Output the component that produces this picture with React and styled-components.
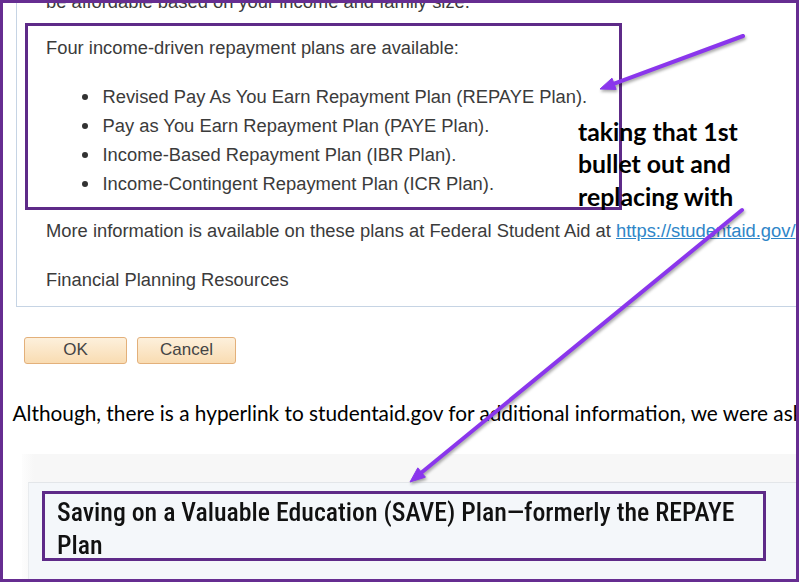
import React, { useLayoutEffect, useRef, useState } from "react";
import styled, { createGlobalStyle } from "styled-components";

const Global = createGlobalStyle`
  html, body { margin: 0; padding: 0; background: #fff; }
  body { font-family: "Liberation Sans", Arial, sans-serif; }
`;

const Frame = styled.div`
  position: relative;
  width: 799px;
  height: 582px;
  box-sizing: border-box;
  border: 3px solid #662d91;
  overflow: hidden;
  background: #fff;
`;

const Page = styled.div`
  display: flex;
  flex-direction: column;
  align-items: flex-start;
  height: 100%;
`;

const Panel = styled.section`
  display: flex;
  flex-direction: column;
  align-items: flex-start;
  margin: -12px 0 0 13px;
  width: 1100px;
  padding-bottom: 14.5px;
  border-left: 1px solid #c6d4e4;
  border-bottom: 1px solid #c6d4e4;
  font-family: "Liberation Sans", Arial, sans-serif;
  font-size: 18.35px;
  line-height: 22px;
  color: #3b3b3b;
`;

const Para = styled.p`
  margin: ${(p) => p.$mt || 0}px 0 0 0;
  padding-left: 29px;
  white-space: nowrap;
`;

const HighlightBox = styled.div`
  margin: 10px 0 0 8px;
  width: 597px;
  box-sizing: border-box;
  border: 3px solid #5e2a88;
  padding: 10.75px 0 9.25px 18px;
`;

const Intro = styled.div`
  white-space: nowrap;
`;

const List = styled.ul`
  margin: 23.25px 0 0 0;
  padding: 0;
  list-style: none;
`;

const Item = styled.li`
  display: flex;
  align-items: center;
  line-height: 29px;
  padding-left: 36px;
  white-space: nowrap;
`;

const Dot = styled.span`
  flex: none;
  width: 6px;
  height: 6px;
  margin: 1px 14.5px 0 0;
  border-radius: 50%;
  background: #333;
`;

const Link = styled.a`
  color: #2f86c8;
  text-decoration: underline;
`;

const ButtonRow = styled.div`
  display: flex;
  gap: 10px;
  margin: 30px 0 0 21px;
`;

const Button = styled.button`
  width: ${(p) => p.$w}px;
  height: 27px;
  padding: 0;
  border: 1px solid #e3b07a;
  border-radius: 3px;
  background: linear-gradient(#fdf0dc, #f9dcb2);
  font-family: "Liberation Sans", Arial, sans-serif;
  font-size: 17px;
  color: #444;
`;

const Note = styled.p`
  margin: 36px 0 0 9.5px;
  font-family: Lato, "Open Sans", sans-serif;
  font-size: 20.8px;
  line-height: 25px;
  color: #000;
  white-space: nowrap;
`;

const Band = styled.div`
  align-self: stretch;
  flex: 1;
  display: flex;
  margin: 29.5px 0 0 19px;
  padding: 28px 0 0 6px;
  background: linear-gradient(to right, #fdfdfd, #f7f7f7 12px);
`;

const Card = styled.div`
  flex: 1;
  padding: 8px 0 0 13px;
  background: #f4f7fa;
  border-top: 1px solid #e3e6e9;
  border-left: 1px solid #e8ebee;
`;

const SaveBox = styled.div`
  width: 724px;
  height: 70px;
  box-sizing: border-box;
  border: 3px solid #5e2a88;
  padding: 1.5px 0 0 12px;
  overflow: hidden;
`;

const Heading = styled.h2`
  margin: 0;
  font-family: Roboto, "Noto Sans", sans-serif;
  font-stretch: 75%;
  font-weight: 500;
  font-size: 26px;
  line-height: 33px;
  color: #111;
  white-space: nowrap;
  transform-origin: 0 0;
`;

const HeadLine = styled.span`
  display: block;
  width: max-content;
`;

const Annotation = styled.div`
  position: absolute;
  left: 575px;
  top: 112.5px;
  font-family: Lato, "Open Sans", sans-serif;
  font-weight: 700;
  font-size: 24.8px;
  line-height: 32.5px;
  color: #000;
`;

const Overlay = styled.svg`
  position: absolute;
  left: -3px;
  top: -3px;
  width: 799px;
  height: 582px;
  pointer-events: none;
  filter: drop-shadow(1.5px 2px 1.5px rgba(0, 0, 0, 0.35));
`;

function arrow(x1, y1, x2, y2, len = 15, half = 6) {
  const dx = x2 - x1;
  const dy = y2 - y1;
  const l = Math.hypot(dx, dy);
  const ux = dx / l;
  const uy = dy / l;
  const bx = x2 - ux * len;
  const by = y2 - uy * len;
  const px = -uy;
  const py = ux;
  return {
    line: [x1, y1, bx + ux * 2, by + uy * 2],
    head: `${x2},${y2} ${bx + px * half},${by + py * half} ${bx - px * half},${by - py * half}`,
  };
}

const ARROWS = [arrow(743, 36, 600, 89), arrow(742, 210, 410, 482)];

const PLANS = [
  "Revised Pay As You Earn Repayment Plan (REPAYE Plan).",
  "Pay as You Earn Repayment Plan (PAYE Plan).",
  "Income-Based Repayment Plan (IBR Plan).",
  "Income-Contingent Repayment Plan (ICR Plan).",
];

const FIRST_LINE_WIDTH = 678;

function SaveHeading() {
  const lineRef = useRef(null);
  const [scale, setScale] = useState(1);
  useLayoutEffect(() => {
    const measure = () => {
      const el = lineRef.current;
      if (!el) return;
      const w = el.offsetWidth;
      if (w > 0) setScale(FIRST_LINE_WIDTH / w);
    };
    measure();
    if (document.fonts && document.fonts.ready) document.fonts.ready.then(measure);
  }, []);
  return (
    <Heading style={{ transform: `scaleX(${scale})` }}>
      <HeadLine ref={lineRef}>
        Saving on a Valuable Education (SAVE) Plan—formerly the REPAYE
      </HeadLine>
      <HeadLine>Plan</HeadLine>
    </Heading>
  );
}

export default function App() {
  return (
    <>
      <Global />
      <Frame>
        <Page>
          <Panel>
            <Para>be affordable based on your income and family size.</Para>
            <HighlightBox>
              <Intro>Four income-driven repayment plans are available:</Intro>
              <List>
                {PLANS.map((p) => (
                  <Item key={p}>
                    <Dot />
                    {p}
                  </Item>
                ))}
              </List>
            </HighlightBox>
            <Para $mt={9.5}>
              More information is available on these plans at Federal Student Aid at{" "}
              <Link href="#">https://studentaid.gov/</Link>
            </Para>
            <Para $mt={27.7}>Financial Planning Resources</Para>
          </Panel>
          <ButtonRow>
            <Button $w={103}>OK</Button>
            <Button $w={99}>Cancel</Button>
          </ButtonRow>
          <Note>
            Although, there is a hyperlink to studentaid.gov for additional information, we were asked
          </Note>
          <Band>
            <Card>
              <SaveBox>
                <SaveHeading />
              </SaveBox>
            </Card>
          </Band>
        </Page>
        <Annotation>
          taking that 1st
          <br />
          bullet out and
          <br />
          replacing with
        </Annotation>
        <Overlay viewBox="0 0 799 582">
          {ARROWS.map((a, i) => (
            <g key={i} fill="#8a36ec" stroke="#8a36ec">
              <line
                x1={a.line[0]}
                y1={a.line[1]}
                x2={a.line[2]}
                y2={a.line[3]}
                strokeWidth="4"
                strokeLinecap="round"
              />
              <polygon points={a.head} strokeWidth="1" strokeLinejoin="round" />
            </g>
          ))}
        </Overlay>
      </Frame>
    </>
  );
}
